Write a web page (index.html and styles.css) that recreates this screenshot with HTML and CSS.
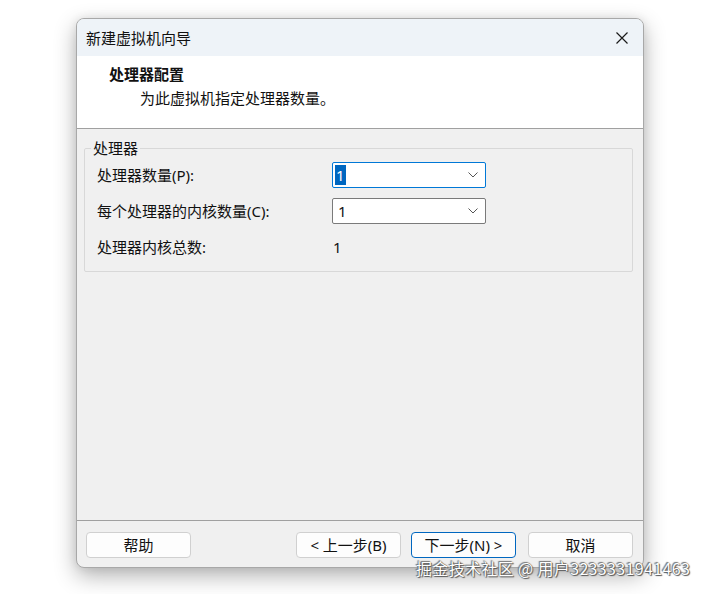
FILE: index.html
```html
<!DOCTYPE html>
<html lang="zh-CN">
<head>
<meta charset="utf-8">
<title>新建虚拟机向导</title>
<link rel="stylesheet" href="styles.css">
</head>
<body>
<div class="window">
  <div class="titlebar">
    <span class="title">新建虚拟机向导</span>
    <span class="close" aria-label="关闭">
      <svg width="12" height="12" viewBox="0 0 12 12"><path d="M0.5 0.5L11.5 11.5M11.5 0.5L0.5 11.5" stroke="#1a1a1a" stroke-width="1.2" fill="none"/></svg>
    </span>
  </div>
  <div class="header">
    <div class="heading">处理器配置</div>
    <div class="subtitle">为此虚拟机指定处理器数量。</div>
  </div>
  <div class="content">
    <fieldset class="group">
      <legend class="group-label">处理器</legend>
      <div class="grid">
        <div class="label">处理器数量(P):</div>
        <div class="select focused"><span class="value sel">1</span><svg class="chev" width="10" height="6" viewBox="0 0 10 6"><path d="M0.5 0.5L5 5L9.5 0.5" stroke="#555" stroke-width="1" fill="none"/></svg></div>
        <div class="label">每个处理器的内核数量(C):</div>
        <div class="select"><span class="value">1</span><svg class="chev" width="10" height="6" viewBox="0 0 10 6"><path d="M0.5 0.5L5 5L9.5 0.5" stroke="#555" stroke-width="1" fill="none"/></svg></div>
        <div class="label">处理器内核总数:</div>
        <div class="total">1</div>
      </div>
    </fieldset>
  </div>
  <div class="footer">
    <button class="btn">帮助</button>
    <div class="spacer"></div>
    <button class="btn">&lt; 上一步(B)</button>
    <button class="btn primary">下一步(N) &gt;</button>
    <button class="btn last">取消</button>
  </div>
</div>
<div class="watermark">掘金技术社区 @ 用户3233331941463</div>
</body>
</html>
```
FILE: styles.css
```css
html, body {
  margin: 0;
  padding: 0;
}
body {
  background: #ffffff;
  width: 709px;
  height: 594px;
  position: relative;
  overflow: hidden;
  font-family: "Noto Sans", "Noto Sans CJK SC", sans-serif;
  font-size: 15px;
  color: #111;
}
.window {
  margin: 18px 0 0 76px;
  width: 566px;
  height: 548px;
  border: 1px solid #a8a8a8;
  border-radius: 8px;
  overflow: hidden;
  background: #f0f0f0;
  box-shadow: 0 8px 22px rgba(0,0,0,0.3), 0 0 10px rgba(0,0,0,0.08);
  display: flex;
  flex-direction: column;
}
.titlebar {
  height: 37px;
  background: #eef3f8;
  display: flex;
  align-items: center;
  justify-content: space-between;
  padding: 0 15px 0 9px;
  flex: none;
}
.title {
  line-height: 20px;
}
.close {
  display: flex;
  width: 12px;
  height: 12px;
}
.header {
  background: #ffffff;
  border-bottom: 1px solid #a0a0a0;
  padding: 8px 0 0 32px;
  box-sizing: border-box;
  flex: none;
  height: 73px;
}
.heading {
  font-weight: bold;
  line-height: 20px;
}
.subtitle {
  line-height: 20px;
  margin-top: 4px;
  padding-left: 31px;
}
.content {
  flex: 1;
  padding: 9px 10px 0 7px;
}
.group {
  margin: 0;
  padding: 4px 12px 11px 12px;
  border: 1px solid #d8d8d8;
  border-radius: 2px;
  min-width: 0;
}
.group-label {
  margin-left: -6px;
  padding: 0 2px;
  line-height: 20px;
}
.grid {
  display: grid;
  grid-template-columns: 235px 154px;
  grid-auto-rows: 26px;
  row-gap: 10px;
  align-items: center;
}
.label {
  line-height: 20px;
  white-space: nowrap;
}
.select {
  height: 26px;
  box-sizing: border-box;
  background: #fff;
  border: 1px solid #7a7a7a;
  border-radius: 2px;
  display: flex;
  align-items: center;
  justify-content: space-between;
  padding: 0 7px 0 5px;
}
.select.focused {
  border-color: #0078d7;
}
.value {
  line-height: 20px;
}
.value.sel {
  background: #0067c0;
  color: #fff;
  padding: 0 1px;
  margin-left: -3px;
}
.chev {
  display: block;
}
.total {
  line-height: 20px;
  padding-left: 1px;
}
.footer {
  border-top: 1px solid #a0a0a0;
  display: flex;
  align-items: flex-start;
  padding: 11px 10px 0 9px;
  box-sizing: border-box;
  flex: none;
  height: 47px;
}
.spacer {
  flex: 1;
}
.btn {
  width: 105px;
  height: 26px;
  box-sizing: border-box;
  background: #fdfdfd;
  border: 1px solid #d0d0d0;
  border-radius: 4px;
  font-family: "Noto Sans", "Noto Sans CJK SC", sans-serif;
  font-size: 15px;
  color: #111;
  padding: 0;
  line-height: 20px;
  margin-left: 10px;
}
.btn:first-child {
  margin-left: 0;
}
.btn.primary {
  border-color: #0067c0;
}
.btn.last {
  margin-left: 12px;
}
.watermark {
  position: absolute;
  left: 416px;
  top: 557px;
  font-size: 16px;
  line-height: 22px;
  letter-spacing: 0.35px;
  color: #ffffff;
  font-family: "Noto Sans CJK SC", sans-serif;
  text-shadow: 0 0 1px #444, 1px 1px 1px #555, -1px -1px 1px #777;
  white-space: nowrap;
}
```
